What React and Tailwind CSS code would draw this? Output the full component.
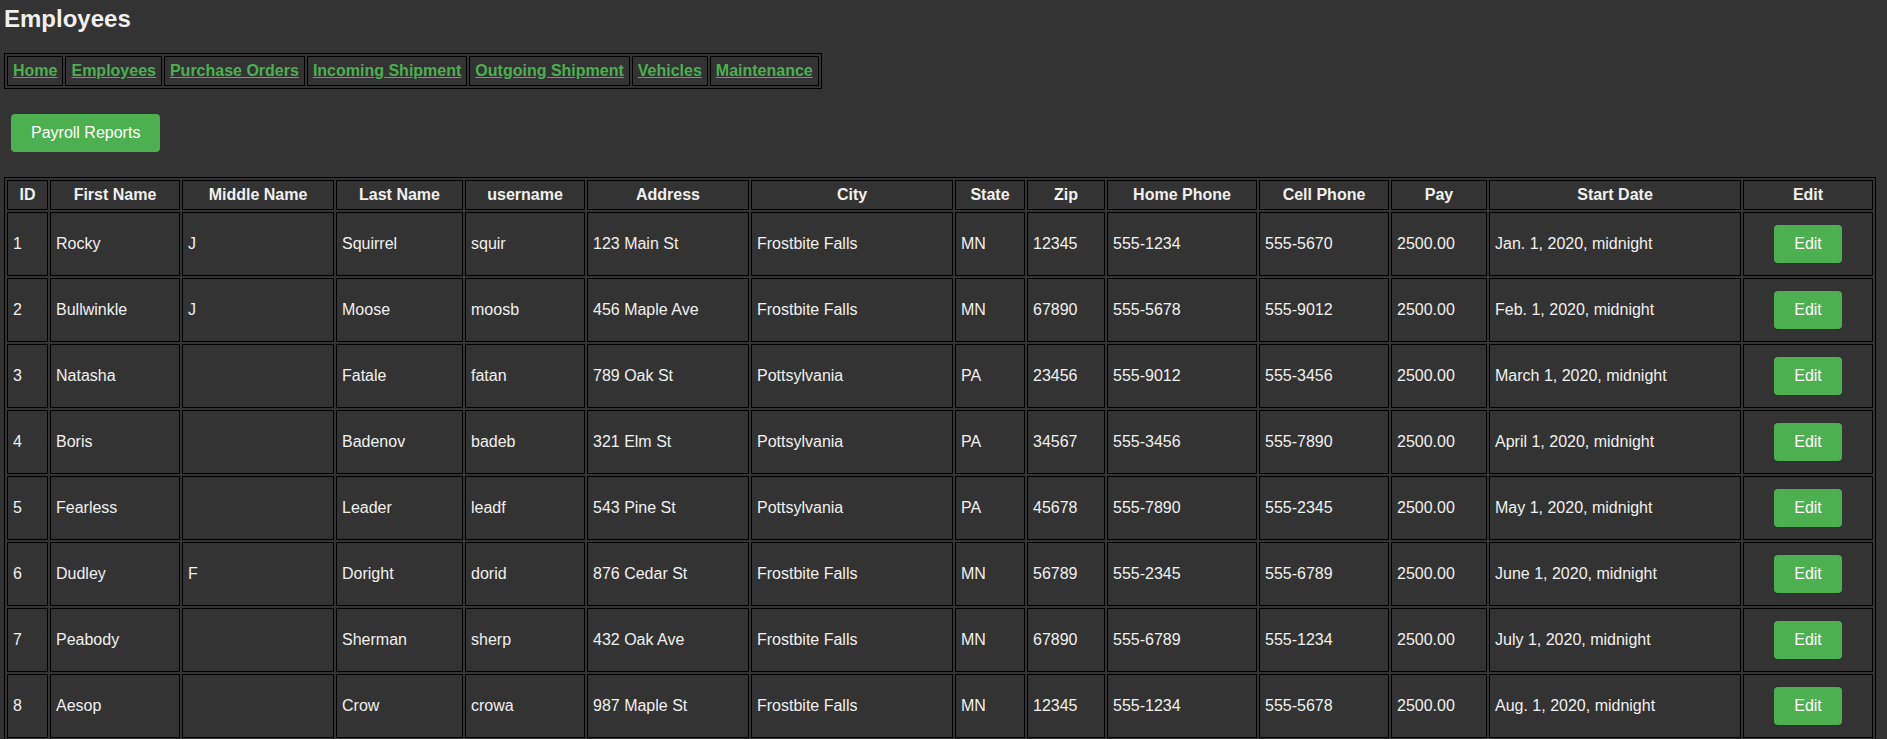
import React from "react";

const nav = ["Home", "Employees", "Purchase Orders", "Incoming Shipment", "Outgoing Shipment", "Vehicles", "Maintenance"];

const cols = [
  ["ID", "w-[41px]"],
  ["First Name", "w-[130px]"],
  ["Middle Name", "w-[152px]"],
  ["Last Name", "w-[127px]"],
  ["username", "w-[120px]"],
  ["Address", "w-[162px]"],
  ["City", "w-[202px]"],
  ["State", "w-[70px]"],
  ["Zip", "w-[78px]"],
  ["Home Phone", "w-[150px]"],
  ["Cell Phone", "w-[130px]"],
  ["Pay", "w-[96px]"],
  ["Start Date", "w-[252px]"],
  ["Edit", "w-[130px]"],
];

const rows = [
  ["1", "Rocky", "J", "Squirrel", "squir", "123 Main St", "Frostbite Falls", "MN", "12345", "555-1234", "555-5670", "2500.00", "Jan. 1, 2020, midnight"],
  ["2", "Bullwinkle", "J", "Moose", "moosb", "456 Maple Ave", "Frostbite Falls", "MN", "67890", "555-5678", "555-9012", "2500.00", "Feb. 1, 2020, midnight"],
  ["3", "Natasha", "", "Fatale", "fatan", "789 Oak St", "Pottsylvania", "PA", "23456", "555-9012", "555-3456", "2500.00", "March 1, 2020, midnight"],
  ["4", "Boris", "", "Badenov", "badeb", "321 Elm St", "Pottsylvania", "PA", "34567", "555-3456", "555-7890", "2500.00", "April 1, 2020, midnight"],
  ["5", "Fearless", "", "Leader", "leadf", "543 Pine St", "Pottsylvania", "PA", "45678", "555-7890", "555-2345", "2500.00", "May 1, 2020, midnight"],
  ["6", "Dudley", "F", "Doright", "dorid", "876 Cedar St", "Frostbite Falls", "MN", "56789", "555-2345", "555-6789", "2500.00", "June 1, 2020, midnight"],
  ["7", "Peabody", "", "Sherman", "sherp", "432 Oak Ave", "Frostbite Falls", "MN", "67890", "555-6789", "555-1234", "2500.00", "July 1, 2020, midnight"],
  ["8", "Aesop", "", "Crow", "crowa", "987 Maple St", "Frostbite Falls", "MN", "12345", "555-1234", "555-5678", "2500.00", "Aug. 1, 2020, midnight"],
];

export default function App() {
  return (
    <div className="min-h-screen bg-[#333333] text-[#f0f0f0] font-['Liberation_Sans',Arial,sans-serif] text-[16px] pt-[5px] px-[4px]">
      <h2 className="text-[24px] font-bold leading-[28px]">Employees</h2>

      <table className="mt-[20px] border-separate border-spacing-[2px] border border-black">
        <tbody>
          <tr>
            {nav.map((n) => (
              <td key={n} className="border border-black p-[5px] font-bold leading-[18px]">
                <a href="#" className="text-[#4caf50] underline">{n}</a>
              </td>
            ))}
          </tr>
        </tbody>
      </table>

      <button className="block mt-[25px] ml-[7px] bg-[#4caf50] text-white px-[20px] py-[10px] rounded-[4px] leading-[18px]">
        Payroll Reports
      </button>

      <table className="mt-[25px] table-fixed w-[1872px] border-separate border-spacing-[2px] border border-black">
        <thead>
          <tr>
            {cols.map(([c, w]) => (
              <th key={c} className={`${w} border border-black p-[5px] font-bold text-center leading-[18px]`}>
                {c}
              </th>
            ))}
          </tr>
        </thead>
        <tbody>
          {rows.map((r) => (
            <tr key={r[0]}>
              {r.map((v, i) => (
                <td key={i} className="border border-black p-[5px] text-left align-middle leading-[18px]">
                  {v}
                </td>
              ))}
              <td className="border border-black p-[5px] align-middle">
                <button className="block mx-auto my-[7px] bg-[#4caf50] text-white px-[20px] py-[10px] rounded-[4px] leading-[18px]">
                  Edit
                </button>
              </td>
            </tr>
          ))}
        </tbody>
      </table>
    </div>
  );
}
